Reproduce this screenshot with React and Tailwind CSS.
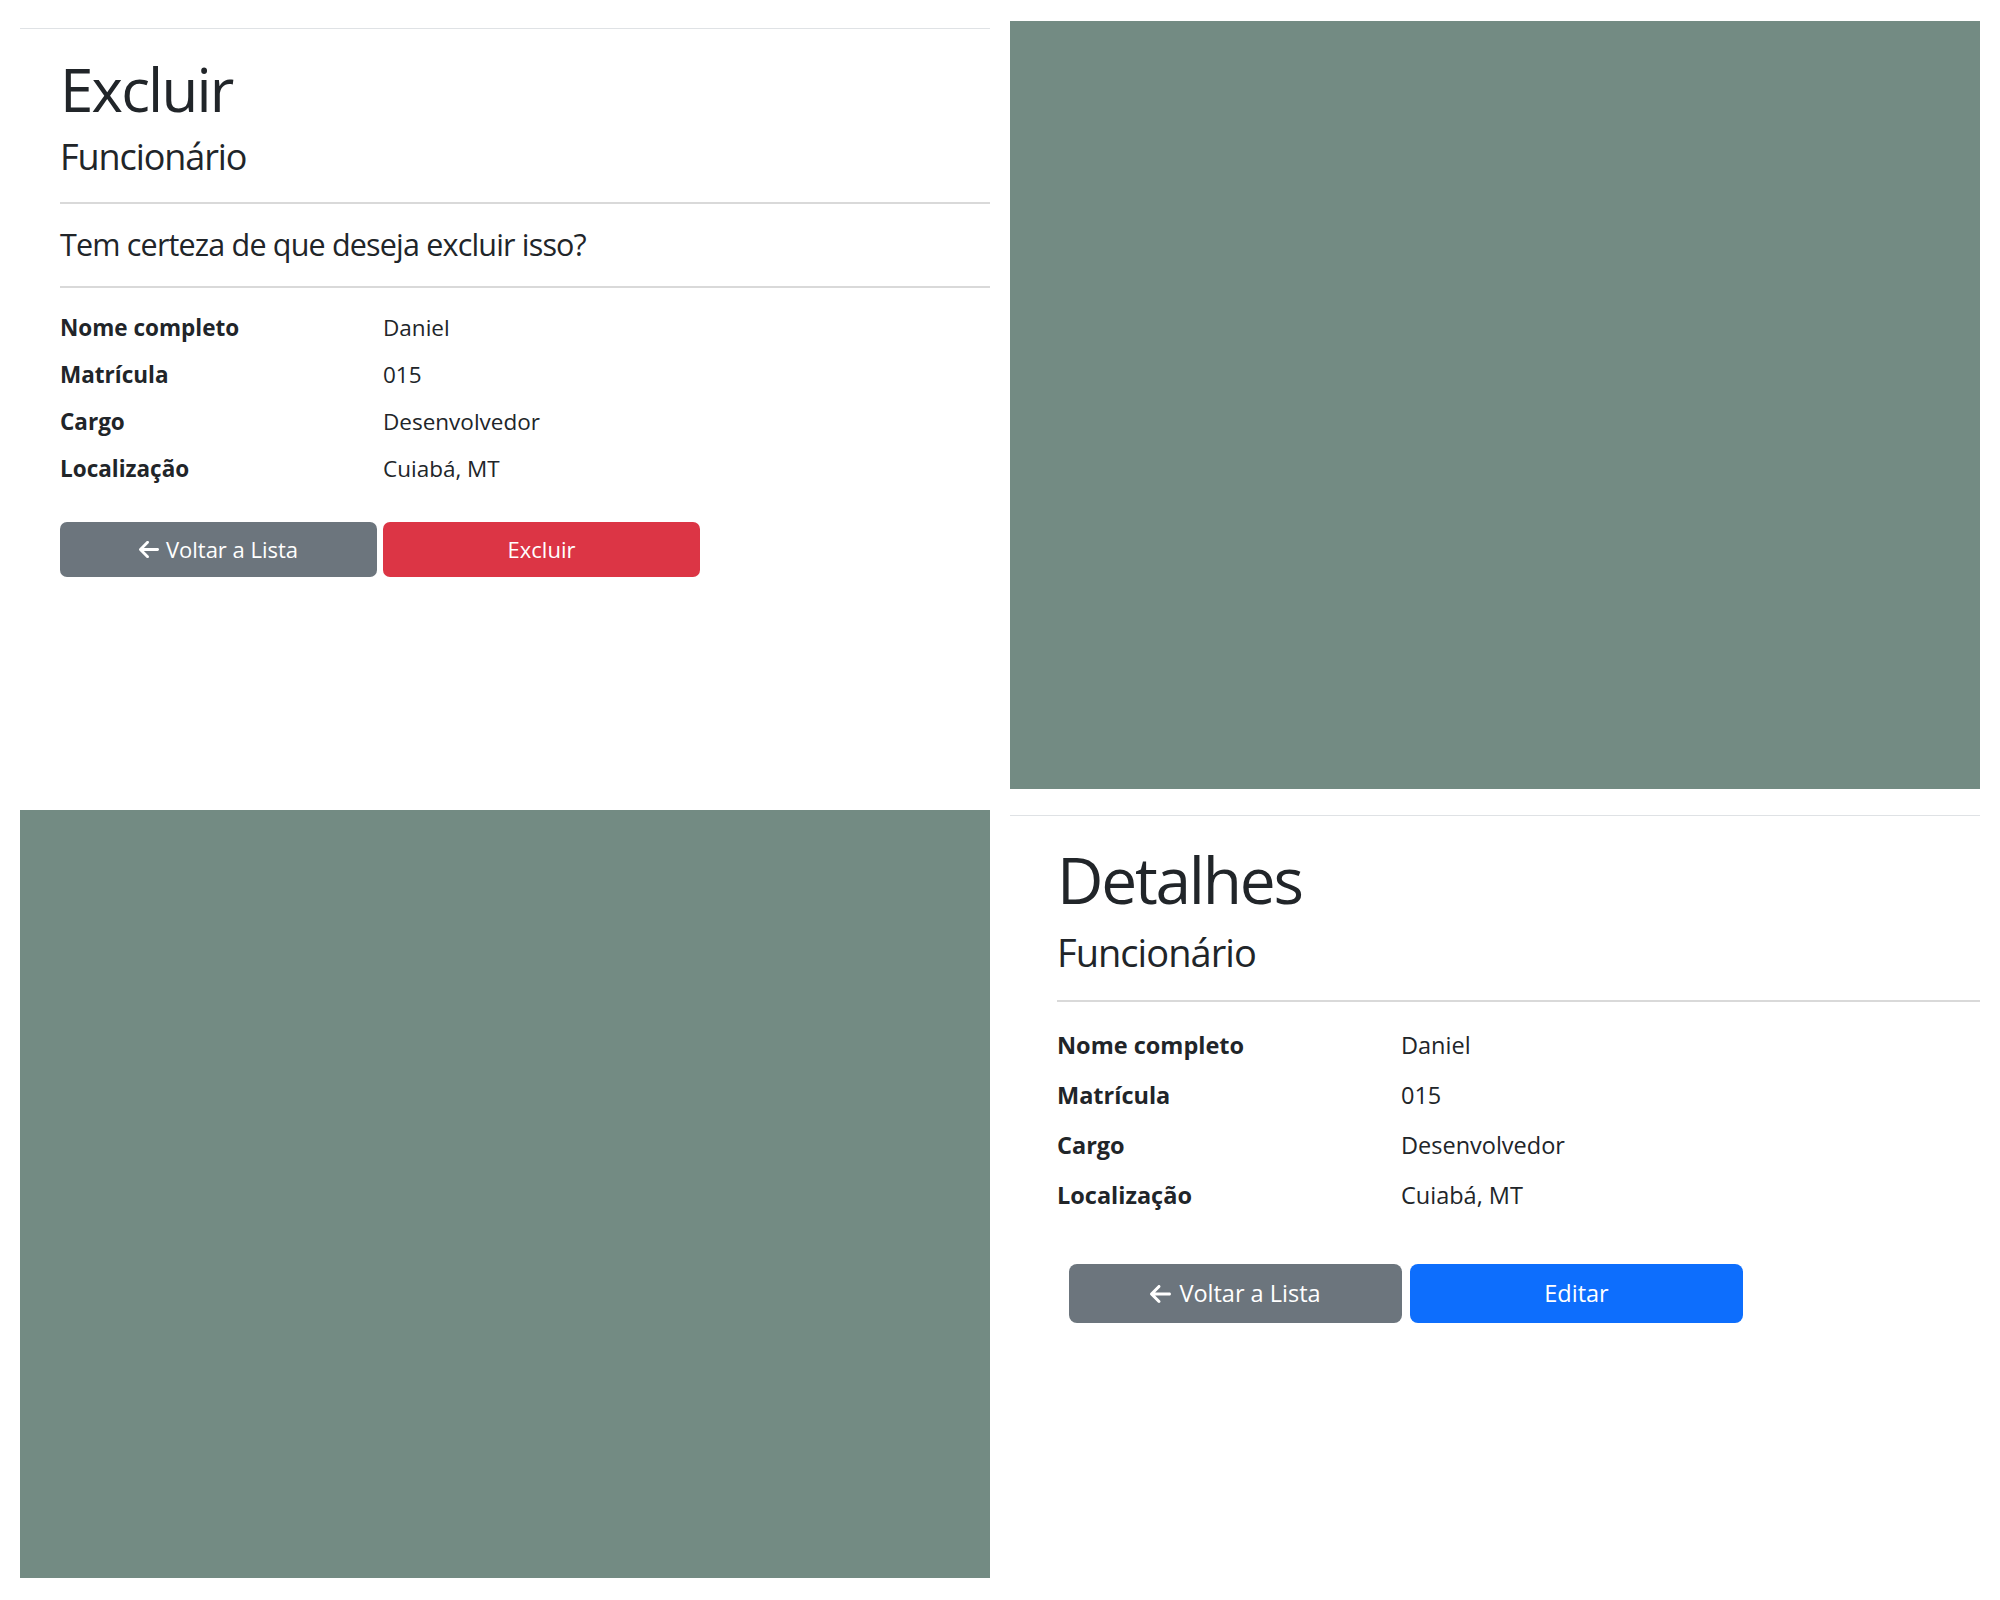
import React from "react";

const FONT = "font-['Open_Sans','Noto_Sans',sans-serif]";

function ArrowLeft({ className }) {
  return (
    <svg viewBox="0 0 448 512" className={className} fill="currentColor" aria-hidden="true">
      <path d="M9.4 233.4c-12.5 12.5-12.5 32.8 0 45.3l160 160c12.5 12.5 32.8 12.5 45.3 0s12.5-32.8 0-45.3L109.2 288 416 288c17.7 0 32-14.3 32-32s-14.3-32-32-32l-306.7 0L214.6 118.6c12.5-12.5 12.5-32.8 0-45.3s-32.8-12.5-45.3 0l-160 160z" />
    </svg>
  );
}

const rows = [
  ["Nome completo", "Daniel"],
  ["Matrícula", "015"],
  ["Cargo", "Desenvolvedor"],
  ["Localização", "Cuiabá, MT"],
];

function DeletePanel() {
  return (
    <div className="overflow-hidden bg-white">
      <div className="mt-[7px] h-px bg-[#dfe2e5]" />
      <div className="pl-[40px]">
        <h1 className="mt-[24px] text-[60px] leading-[72px] font-medium tracking-[-0.03em]">Excluir</h1>
        <h4 className="mt-[10px] text-[36px] leading-[44px] font-medium tracking-[-0.03em]">Funcionário</h4>
        <div className="mt-[23px] h-[2px] bg-[#d9d9d9]" />
        <h5 className="mt-[22px] text-[30.5px] leading-[36px] font-medium tracking-[-0.027em]">Tem certeza de que deseja excluir isso?</h5>
        <div className="mt-[24px] h-[2px] bg-[#d9d9d9]" />
        <dl className="mt-[16px] grid grid-cols-[323px_1fr] text-[22.5px] leading-[47px]">
          {rows.map(([k, v]) => (
            <React.Fragment key={k}>
              <dt className="font-bold">{k}</dt>
              <dd>{v}</dd>
            </React.Fragment>
          ))}
        </dl>
        <div className="mt-[30px] flex gap-[6px]">
          <button className="flex h-[55px] w-[317px] items-center justify-center gap-[7px] rounded-[7px] bg-[#6c757d] text-[22px] text-white">
            <ArrowLeft className="h-[23px] w-[20px]" />
            <span>Voltar a Lista</span>
          </button>
          <button className="flex h-[55px] w-[317px] items-center justify-center rounded-[7px] bg-[#dc3545] text-[22px] text-white">
            Excluir
          </button>
        </div>
      </div>
    </div>
  );
}

function DetailsPanel() {
  return (
    <div className="overflow-hidden bg-white">
      <div className="mt-[5px] h-px bg-[#dfe2e5]" />
      <div className="pl-[47px]">
        <h1 className="mt-[25px] text-[64px] leading-[77px] font-medium tracking-[-0.035em]">Detalhes</h1>
        <h4 className="mt-[11px] text-[38px] leading-[46px] font-medium tracking-[-0.025em]">Funcionário</h4>
        <div className="mt-[25px] h-[2px] bg-[#d9d9d9]" />
        <dl className="mt-[18px] grid grid-cols-[344px_1fr] text-[23.5px] leading-[50px]">
          {rows.map(([k, v]) => (
            <React.Fragment key={k}>
              <dt className="font-bold">{k}</dt>
              <dd>{v}</dd>
            </React.Fragment>
          ))}
        </dl>
        <div className="ml-[12px] mt-[44px] flex gap-[8px]">
          <button className="flex h-[59px] w-[333px] items-center justify-center gap-[8px] rounded-[8px] bg-[#6c757d] text-[23.5px] text-white">
            <ArrowLeft className="h-[24px] w-[21px]" />
            <span>Voltar a Lista</span>
          </button>
          <button className="flex h-[59px] w-[333px] items-center justify-center rounded-[8px] bg-[#0d6efd] text-[23.5px] text-white">
            Editar
          </button>
        </div>
      </div>
    </div>
  );
}

export default function App() {
  return (
    <div className={`${FONT} h-[1600px] w-[2000px] bg-white pl-[20px] pt-[21px] text-[#212529]`}>
      <div className="grid grid-cols-[970px_970px] grid-rows-[768px_768px] gap-x-[20px] gap-y-[21px]">
        <DeletePanel />
        <div className="bg-[#738b83]" />
        <div className="bg-[#738b83]" />
        <DetailsPanel />
      </div>
    </div>
  );
}
